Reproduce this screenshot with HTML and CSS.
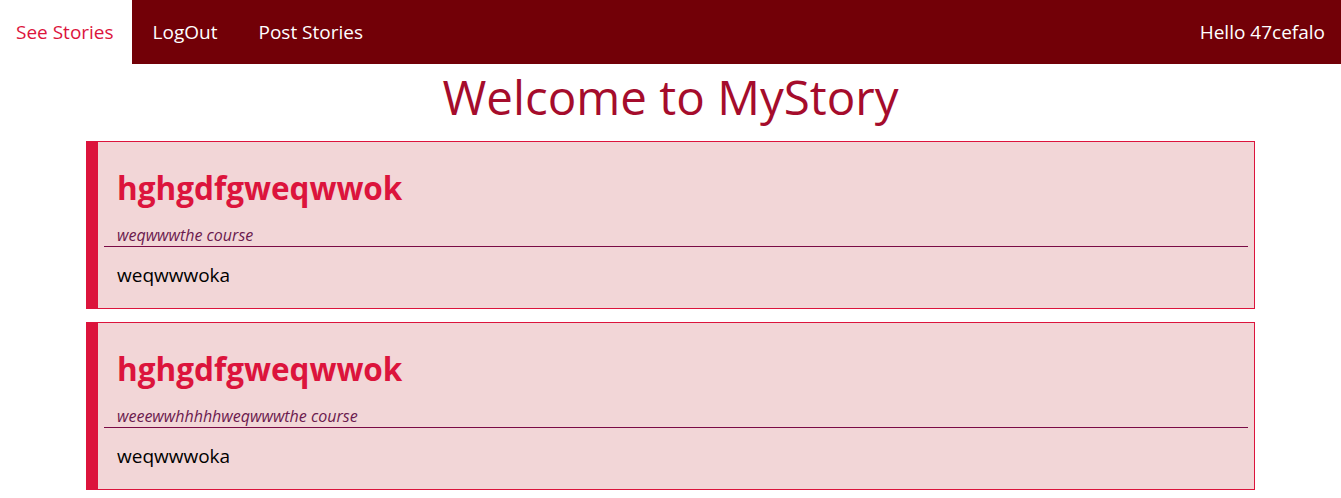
FILE: index.html
```html
<!DOCTYPE html>
<html>
<head>
<meta charset="utf-8">
<link rel="stylesheet" href="styles.css">
</head>
<body>
<nav class="topnav">
  <a class="nav-link active" href="#">See Stories</a>
  <a class="nav-link" href="#">LogOut</a>
  <a class="nav-link" href="#">Post Stories</a>
  <span class="greeting">Hello 47cefalo</span>
</nav>
<h1 class="title">Welcome to MyStory</h1>
<main class="stories">
  <article class="story">
    <h2 class="story-title">hghgdfgweqwwok</h2>
    <p class="story-sub">weqwwwthe course</p>
    <p class="story-body">weqwwwoka</p>
  </article>
  <article class="story">
    <h2 class="story-title">hghgdfgweqwwok</h2>
    <p class="story-sub">weeewwhhhhhweqwwwthe course</p>
    <p class="story-body">weqwwwoka</p>
  </article>
</main>
</body>
</html>
```
FILE: styles.css
```css
* { box-sizing: border-box; }
body {
  margin: 0;
  font-family: "Open Sans", "Noto Sans", sans-serif;
  background: #ffffff;
}
.topnav {
  display: flex;
  align-items: stretch;
  height: 64px;
  background: #720007;
}
.nav-link {
  display: flex;
  align-items: center;
  padding: 0 20px 0 21px;
  color: #ffffff;
  text-decoration: none;
  font-size: 19px;
}
.nav-link.active {
  background: #ffffff;
  color: #dc143c;
  padding: 0 18px 0 16px;
}
.greeting {
  margin-left: auto;
  display: flex;
  align-items: center;
  padding-right: 16px;
  color: #ffffff;
  font-size: 19px;
}
.title {
  margin: 0;
  height: 77px;
  line-height: 66px;
  text-align: center;
  font-size: 47.5px;
  font-weight: 400;
  color: #a50c2c;
}
.story {
  width: 1169px;
  margin: 0 auto 13px;
  height: 168px;
  background: #f2d6d7;
  border: 1px solid #dc143c;
  border-left: 12px solid #dc143c;
  padding: 0 6px;
}
.story-title {
  margin: 24px 0 0 13px;
  font-size: 31.5px;
  line-height: 44px;
  color: #dc143c;
  font-weight: 700;
}
.story-sub {
  margin: 14px 0 0;
  padding-left: 13px;
  font-size: 16px;
  line-height: 22px;
  font-style: italic;
  color: #6b1a4e;
  border-bottom: 1px solid #7a0b45;
}
.story-body {
  margin: 15px 0 0 13px;
  font-size: 19px;
  line-height: 26px;
  color: #000000;
}
```
